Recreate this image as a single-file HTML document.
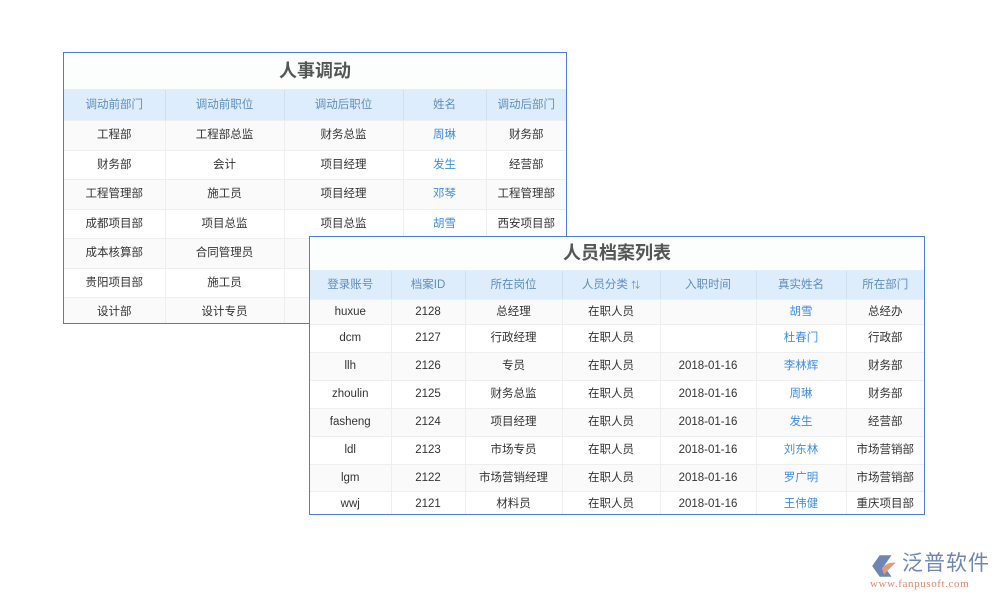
<!DOCTYPE html>
<html><head><meta charset="utf-8">
<style>
*{margin:0;padding:0;box-sizing:border-box}
body{width:1000px;height:600px;background:#fff;position:relative;overflow:hidden;font-family:"Liberation Sans","Noto Sans CJK SC",sans-serif;font-size:11.5px;color:#333}
.box{position:absolute;border:1px solid #4a7fd4;background:#fff}
.ttl{text-align:center;font-weight:bold;color:#555;font-size:18px;background:#fcfdfd;border-bottom:1px solid #e4eef8}
table{border-collapse:collapse;width:100%;table-layout:fixed}
td,th{text-align:center;vertical-align:middle;line-height:14px;padding:0;border-right:1px solid #eceeef;border-bottom:1px solid #eeeeee;font-weight:normal;overflow:hidden;white-space:nowrap}
td:last-child,th:last-child{border-right:none}
th{background:#deedfb;color:#5e8ebf;border-right:1px solid #cddff0}
tr:nth-child(odd) td{background:#fff}
tr:nth-child(even) td{background:#fafafa}
.b{color:#3d8ee6}
</style></head><body>

<div class="box" style="left:63px;top:52px;width:504px;height:272px;overflow:hidden">
<div class="ttl" style="height:37px;line-height:36px">人事调动</div>
<table>
<colgroup><col style="width:101px"><col style="width:119px"><col style="width:119px"><col style="width:83px"><col></colgroup>
<tr style="height:30px"><th>调动前部门</th><th>调动前职位</th><th>调动后职位</th><th>姓名</th><th>调动后部门</th></tr>
<tr style="height:30px"><td>工程部</td><td>工程部总监</td><td>财务总监</td><td class="b">周琳</td><td>财务部</td></tr>
<tr style="height:29px"><td>财务部</td><td>会计</td><td>项目经理</td><td class="b">发生</td><td>经营部</td></tr>
<tr style="height:30px"><td>工程管理部</td><td>施工员</td><td>项目经理</td><td class="b">邓琴</td><td>工程管理部</td></tr>
<tr style="height:29px"><td>成都项目部</td><td>项目总监</td><td>项目总监</td><td class="b">胡雪</td><td>西安项目部</td></tr>
<tr style="height:30px"><td>成本核算部</td><td>合同管理员</td><td></td><td></td><td></td></tr>
<tr style="height:29px"><td>贵阳项目部</td><td>施工员</td><td></td><td></td><td></td></tr>
<tr style="height:30px"><td>设计部</td><td>设计专员</td><td></td><td></td><td></td></tr>
</table>
</div>

<div class="box" style="left:309px;top:236px;width:616px;height:279px;overflow:hidden">
<div class="ttl" style="height:34px;line-height:33px">人员档案列表</div>
<table>
<colgroup><col style="width:81px"><col style="width:74px"><col style="width:97px"><col style="width:98px"><col style="width:96px"><col style="width:90px"><col></colgroup>
<tr style="height:28px"><th>登录账号</th><th>档案ID</th><th>所在岗位</th><th>人员分类 <span style="font-size:9px">⇅</span></th><th>入职时间</th><th>真实姓名</th><th>所在部门</th></tr>
<tr style="height:25px"><td>huxue</td><td>2128</td><td>总经理</td><td>在职人员</td><td></td><td class="b">胡雪</td><td>总经办</td></tr>
<tr style="height:28px"><td>dcm</td><td>2127</td><td>行政经理</td><td>在职人员</td><td></td><td class="b">杜春门</td><td>行政部</td></tr>
<tr style="height:28px"><td>llh</td><td>2126</td><td>专员</td><td>在职人员</td><td>2018-01-16</td><td class="b">李林辉</td><td>财务部</td></tr>
<tr style="height:28px"><td>zhoulin</td><td>2125</td><td>财务总监</td><td>在职人员</td><td>2018-01-16</td><td class="b">周琳</td><td>财务部</td></tr>
<tr style="height:28px"><td>fasheng</td><td>2124</td><td>项目经理</td><td>在职人员</td><td>2018-01-16</td><td class="b">发生</td><td>经营部</td></tr>
<tr style="height:28px"><td>ldl</td><td>2123</td><td>市场专员</td><td>在职人员</td><td>2018-01-16</td><td class="b">刘东林</td><td>市场营销部</td></tr>
<tr style="height:27px"><td>lgm</td><td>2122</td><td>市场营销经理</td><td>在职人员</td><td>2018-01-16</td><td class="b">罗广明</td><td>市场营销部</td></tr>
<tr style="height:26px"><td>wwj</td><td>2121</td><td>材料员</td><td>在职人员</td><td>2018-01-16</td><td class="b">王伟健</td><td>重庆项目部</td></tr>
</table>
</div>

<div style="position:absolute;left:868px;top:550px;width:132px;height:42px">
<svg width="28" height="26" style="position:absolute;left:2px;top:3px" viewBox="0 0 26 24">
<path d="M2 12 L9 2 L20 2 L13 12 L20 22 L9 22 Z" fill="#6e86b3"/>
<path d="M11 14 Q16 8 24 9 Q18 14 13 20 Z" fill="#e39a78"/>
</svg>
<div style="position:absolute;left:34px;top:0;font-size:21px;color:#6e86b3;letter-spacing:1px;line-height:28px">泛普软件</div>
<div style="position:absolute;left:2px;top:28px;font-size:11px;color:#e0896a;font-family:'Liberation Serif',serif;letter-spacing:0.6px">www.fanpusoft.com</div>
</div>
</body></html>
